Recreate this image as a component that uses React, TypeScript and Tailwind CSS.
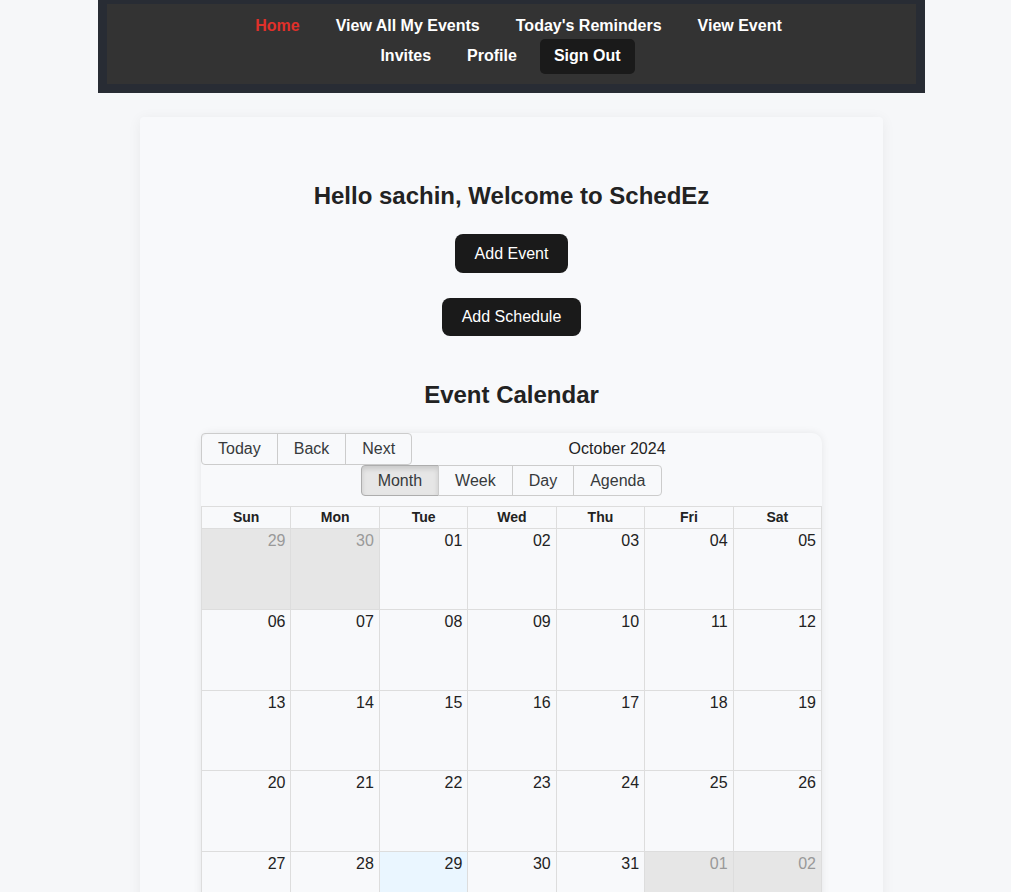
import React from "react";

const font = { fontFamily: '"Liberation Sans", Arial, sans-serif' };

const weeks: { d: string; off?: boolean; today?: boolean }[][] = [
  [{ d: "29", off: true }, { d: "30", off: true }, { d: "01" }, { d: "02" }, { d: "03" }, { d: "04" }, { d: "05" }],
  [{ d: "06" }, { d: "07" }, { d: "08" }, { d: "09" }, { d: "10" }, { d: "11" }, { d: "12" }],
  [{ d: "13" }, { d: "14" }, { d: "15" }, { d: "16" }, { d: "17" }, { d: "18" }, { d: "19" }],
  [{ d: "20" }, { d: "21" }, { d: "22" }, { d: "23" }, { d: "24" }, { d: "25" }, { d: "26" }],
  [{ d: "27" }, { d: "28" }, { d: "29", today: true }, { d: "30" }, { d: "31" }, { d: "01", off: true }, { d: "02", off: true }],
];

const days = ["Sun", "Mon", "Tue", "Wed", "Thu", "Fri", "Sat"];

function NavLink({ children, active }: { children: React.ReactNode; active?: boolean }) {
  return (
    <a
      className={
        active
          ? "px-[14px] h-[30px] flex items-center font-bold text-[16px] text-[#e0302a] cursor-pointer"
          : "px-[14px] h-[30px] flex items-center font-bold text-[16px] text-white cursor-pointer"
      }
    >
      {children}
    </a>
  );
}

export default function App() {
  return (
    <div className="min-h-screen bg-[#f6f7f9] flex flex-col items-center pl-3" style={font}>
      <nav className="w-[827px] bg-[#282c34] px-[9px] pt-[4px] pb-[9px]">
        <div className="bg-[#333333] h-[80px] pt-[7px] flex flex-col">
          <div className="h-[30px] flex justify-center items-center gap-2 pl-[14px]">
            <NavLink active>Home</NavLink>
            <NavLink>View All My Events</NavLink>
            <NavLink>Today's Reminders</NavLink>
            <NavLink>View Event</NavLink>
          </div>
          <div className="h-[30px] flex justify-center items-center gap-2 pr-[22px]">
            <NavLink>Invites</NavLink>
            <NavLink>Profile</NavLink>
            <a className="ml-px px-[14px] h-[35px] -my-[3px] flex items-center rounded-[5px] bg-[#1a1a1a] font-bold text-[16px] text-white cursor-pointer">
              Sign Out
            </a>
          </div>
        </div>
      </nav>

      <main className="mt-[24px] w-[743px] bg-[#f8f9fb] rounded-[4px] shadow-[0_2px_14px_rgba(0,0,0,0.06)] flex flex-col items-center pb-10">
        <h1 className="mt-[65px] text-[24px] leading-[28px] font-bold text-[#222]">
          Hello sachin, Welcome to SchedEz
        </h1>
        <button className="mt-[24px] h-[39px] px-5 rounded-lg bg-[#1a1a1a] text-white text-[16px]">
          Add Event
        </button>
        <button className="mt-[25px] h-[38px] px-5 rounded-lg bg-[#1a1a1a] text-white text-[16px]">
          Add Schedule
        </button>
        <h2 className="mt-[45px] text-[24px] leading-[28px] font-bold text-[#222]">Event Calendar</h2>

        <div className="mt-[24px] w-[621px] rounded-[10px] bg-[#f8f9fb] shadow-[0_0_8px_rgba(0,0,0,0.08)] text-[#373a3c]">
          <div className="flex flex-wrap items-center mb-[10px]">
            <div className="flex">
              <button className="h-[32px] px-4 border border-[#ccc] rounded-l-[4px] text-[16px]">Today</button>
              <button className="h-[32px] px-4 border border-[#ccc] -ml-px text-[16px]">Back</button>
              <button className="h-[32px] px-4 border border-[#ccc] -ml-px rounded-r-[4px] text-[16px]">Next</button>
            </div>
            <div className="flex-1 text-center text-[16px] text-[#222]">October 2024</div>
            <div className="w-full flex justify-center">
              <button className="h-[31px] px-4 border border-[#adadad] rounded-l-[4px] bg-[#e6e6e6] shadow-[inset_0_3px_5px_rgba(0,0,0,0.125)] text-[16px]">
                Month
              </button>
              <button className="h-[31px] px-4 border border-[#ccc] -ml-px text-[16px]">Week</button>
              <button className="h-[31px] px-4 border border-[#ccc] -ml-px text-[16px]">Day</button>
              <button className="h-[31px] px-4 border border-[#ccc] -ml-px rounded-r-[4px] text-[16px]">Agenda</button>
            </div>
          </div>

          <div className="border border-[#ddd] bg-[#f8f9fb]">
            <div className="grid grid-cols-7 h-[22px] border-b border-[#ddd]">
              {days.map((d, i) => (
                <div
                  key={d}
                  className={
                    i === 0
                      ? "flex items-center justify-center text-[14px] font-bold text-[#222]"
                      : "flex items-center justify-center text-[14px] font-bold text-[#222] border-l border-[#ddd]"
                  }
                >
                  {d}
                </div>
              ))}
            </div>
            {weeks.map((w, wi) => (
              <div
                key={wi}
                className={wi === 0 ? "grid grid-cols-7 h-[80px]" : "grid grid-cols-7 h-[80.5px] border-t border-[#ddd]"}
              >
                {w.map((c, ci) => {
                  const bg = c.off ? "bg-[#e6e6e6] text-[#999]" : c.today ? "bg-[#eaf6ff] text-[#222]" : "text-[#222]";
                  const bl = ci === 0 ? "" : "border-l border-[#ddd]";
                  return (
                    <div key={ci} className={`${bg} ${bl} text-right pr-[5px] pt-[3px] text-[16px] leading-[18px]`}>
                      {c.d}
                    </div>
                  );
                })}
              </div>
            ))}
          </div>
        </div>
      </main>
    </div>
  );
}
